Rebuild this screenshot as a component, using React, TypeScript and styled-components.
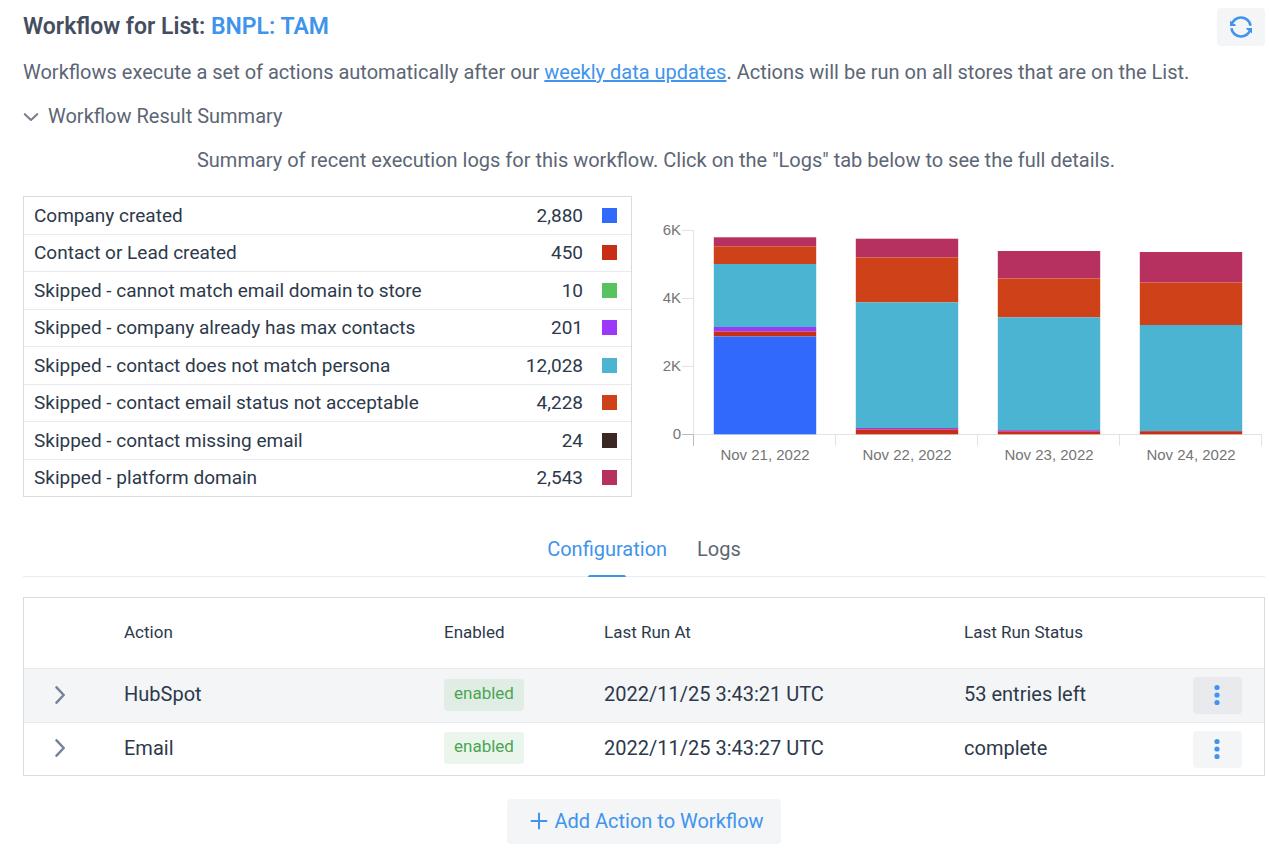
import React from "react";
import styled, { createGlobalStyle } from "styled-components";

const GlobalStyle = createGlobalStyle`
  *, *::before, *::after { box-sizing: border-box; }
  body {
    margin: 0;
    background: #fff;
    color: #5c6675;
    font: 400 20px/30px Roboto, "Liberation Sans", sans-serif;
  }
  button { font: inherit; cursor: pointer; }
`;

const BLUE = "#4094ec";

const Page = styled.main`
  padding: 8px 4px 7px 23px;
`;

const Header = styled.header`
  display: flex;
  align-items: center;
  justify-content: space-between;
`;

const Title = styled.h1`
  margin: 0;
  font-size: 23px;
  line-height: 38px;
  font-weight: 600;
  color: #454e5f;
`;

const ListLink = styled.a`
  color: ${BLUE};
  text-decoration: none;
`;

const SoftButton = styled.button<{ $dark?: boolean }>`
  display: inline-flex;
  align-items: center;
  justify-content: center;
  gap: 6px;
  border: 0;
  border-radius: 4px;
  padding: 0;
  background: ${(p) => (p.$dark ? "#e8eaee" : "#f3f5f7")};
  color: ${BLUE};
`;

const RefreshButton = styled(SoftButton)`
  width: 48px;
  height: 38px;
`;

const Intro = styled.p`
  margin: 11px 0 14px;
`;

const TextLink = styled.a`
  color: ${BLUE};
  text-decoration: underline;
`;

const SummaryToggle = styled.button`
  display: flex;
  align-items: center;
  gap: 9px;
  padding: 0;
  border: 0;
  background: none;
  color: inherit;
`;

const SummaryNote = styled.p`
  margin: 14px 0 21px;
  padding-left: 24px;
  text-align: center;
`;

const SummaryGrid = styled.section`
  display: grid;
  grid-template-columns: 1fr 1fr;
  gap: 24px;
  align-items: start;
`;

const LegendTable = styled.table`
  width: 100%;
  height: 301px;
  border: 1px solid #d8dce2;
  border-spacing: 0;
  color: #2d394b;
  font-size: 19px;
  line-height: 28px;
`;

const LegendCell = styled.td<{ $align?: string }>`
  padding: 1px 10px 0;
  text-align: ${(p) => p.$align ?? "left"};
  tr:not(:last-child) > & { border-bottom: 1px solid #e8eaee; }
`;

const SwatchCell = styled(LegendCell)`
  width: 38px;
  padding: 0 14px 0 9px;
`;

const Swatch = styled.span<{ $color: string }>`
  display: block;
  width: 15px;
  height: 15px;
  background: ${(p) => p.$color};
`;

const Chart = styled.svg`
  display: block;
  width: 100%;
  height: auto;
  font: 15px "Liberation Sans", Arial, sans-serif;
`;

const Tabs = styled.nav`
  display: flex;
  justify-content: center;
  gap: 30px;
  margin-top: 37px;
  border-bottom: 1px solid #e8ebef;
`;

const Tab = styled.button<{ $active?: boolean }>`
  position: relative;
  padding: 0 0 12px;
  border: 0;
  background: none;
  color: ${(p) => (p.$active ? BLUE : "inherit")};
  &::after {
    content: ${(p) => (p.$active ? '""' : "none")};
    position: absolute;
    left: 50%;
    bottom: -1px;
    width: 38px;
    height: 2px;
    margin-left: -19px;
    border-radius: 2px 2px 0 0;
    background: ${BLUE};
  }
`;

const ActionsTable = styled.table`
  width: 100%;
  margin-top: 20px;
  border: 1px solid #d8dce2;
  border-spacing: 0;
  table-layout: fixed;
  color: #2d394b;
`;

const Col = styled.col<{ $w?: number }>`
  width: ${(p) => (p.$w ? `${p.$w}px` : "auto")};
`;

const HeadCell = styled.th`
  height: 71px;
  padding: 0 20px 3px;
  border-bottom: 1px solid #e5eaef;
  text-align: left;
  font-size: 17px;
  font-weight: 400;
`;

const ActionRow = styled.tr<{ $hovered?: boolean }>`
  background: ${(p) => (p.$hovered ? "#f3f5f7" : "#fff")};
`;

const Cell = styled.td`
  height: 54px;
  padding: 0 20px;
  vertical-align: middle;
  tr:not(:last-child) > & { border-bottom: 1px solid #e5eaef; }
  tr:last-child > & { height: 52px; }
`;

const CellText = styled.div`
  padding-bottom: 3px;
`;

const MenuCell = styled(Cell)`
  padding: 0 22px 0 9px;
`;

const ExpandButton = styled.button`
  display: flex;
  width: 32px;
  height: 32px;
  align-items: center;
  justify-content: center;
  margin-bottom: 2px;
  padding: 0;
  border: 0;
  background: none;
`;

const Badge = styled.span<{ $dark?: boolean }>`
  display: block;
  width: max-content;
  margin-bottom: 2px;
  padding: 0 10px 4px;
  border-radius: 4px;
  background: ${(p) => (p.$dark ? "#e0ede4" : "#eaf6ec")};
  color: #4aa553;
  font-size: 17px;
  line-height: 28px;
`;

const MenuButton = styled(SoftButton)`
  display: flex;
  width: 49px;
  height: 37px;
`;

const Footer = styled.footer`
  display: flex;
  justify-content: center;
  margin-top: 23px;
`;

const AddButton = styled(SoftButton)`
  height: 45px;
  padding: 0 17px 1px 23px;
`;

const legend = [
  { label: "Company created", count: "2,880", color: "#3069fc" },
  { label: "Contact or Lead created", count: "450", color: "#c72e16" },
  { label: "Skipped - cannot match email domain to store", count: "10", color: "#57c360" },
  { label: "Skipped - company already has max contacts", count: "201", color: "#9b38fb" },
  { label: "Skipped - contact does not match persona", count: "12,028", color: "#4cb4d3" },
  { label: "Skipped - contact email status not acceptable", count: "4,228", color: "#cf4119" },
  { label: "Skipped - contact missing email", count: "24", color: "#3b2825" },
  { label: "Skipped - platform domain", count: "2,543", color: "#b63160" },
];

const BASE = 238;
const STEP = 142;
const [CREATED, LEAD, MAXED, PERSONA, STATUS, PLATFORM] = [0, 1, 3, 4, 5, 7].map((i) => legend[i].color);

/* Each day's segments, from the top of the bar down: [upper edge, colour]. */
const days: { label: string; segments: [number, string][] }[] = [
  {
    label: "Nov 21, 2022",
    segments: [[41.3, PLATFORM], [50.3, STATUS], [68, PERSONA], [131, MAXED], [135.5, LEAD], [140.5, CREATED]],
  },
  {
    label: "Nov 22, 2022",
    segments: [[42.7, PLATFORM], [61.4, STATUS], [106.4, PERSONA], [232, MAXED], [233.4, LEAD]],
  },
  {
    label: "Nov 23, 2022",
    segments: [[55, PLATFORM], [82.5, STATUS], [121.4, PERSONA], [234.2, MAXED], [235.3, LEAD]],
  },
  {
    label: "Nov 24, 2022",
    segments: [[56, PLATFORM], [86.4, STATUS], [129, PERSONA], [235.2, LEAD]],
  },
];

const yTicks = [
  { y: 34, label: "6K" },
  { y: 102, label: "4K" },
  { y: 170, label: "2K" },
  { y: 238, label: "0" },
];

function ResultChart() {
  return (
    <Chart viewBox="0 0 609 300" role="img" aria-label="Workflow results per day">
      <g stroke="#e3e3e3" fill="none">
        <path d="M37.5 34V238M38 238.5H606" />
        {yTicks.slice(0, 3).map((t) => (
          <path key={t.y} d={`M26 ${t.y + 0.5}H37`} />
        ))}
        {[1, 2, 3, 4].map((i) => (
          <path key={i} d={`M${37.5 + STEP * i} 239V250`} />
        ))}
        <path d="M26 238.5H37.5V250" stroke="#bdbdbd" />
      </g>
      {days.map((day, i) =>
        day.segments.map(([top, color], j) => {
          const bottom = j + 1 < day.segments.length ? day.segments[j + 1][0] : BASE + 0.3;
          return (
            <rect
              key={`${i}-${j}`}
              x={57.8 + STEP * i}
              y={top}
              width={102.4}
              height={bottom - top}
              fill={color}
            />
          );
        })
      )}
      <g fill="#757575">
        {yTicks.map((t) => (
          <text key={t.y} x="25" y={t.y + 5} textAnchor="end">
            {t.label}
          </text>
        ))}
        {days.map((day, i) => (
          <text key={day.label} x={109 + STEP * i} y="264" textAnchor="middle">
            {day.label}
          </text>
        ))}
      </g>
    </Chart>
  );
}

function RefreshIcon() {
  return (
    <svg width="24" height="24" viewBox="0 0 24 24" fill="none" aria-hidden="true">
      <g stroke={BLUE} strokeWidth="2.6">
        <path d="M2.6 9.8A9.7 9.7 0 0 1 21.6 10.8" />
        <path d="M21.4 14.2A9.7 9.7 0 0 1 2.4 13.2" />
      </g>
      <path d="M1 5.4V10.9H6.6V9.6L4.4 8.8Z" fill={BLUE} />
      <path d="M23 18.6V13.1H17.4V14.4L19.6 15.2Z" fill={BLUE} />
    </svg>
  );
}

function ChevronDown() {
  return (
    <svg width="16" height="12" viewBox="0 0 16 12" fill="none" aria-hidden="true">
      <path d="M1.8 4.2L8 10L14.2 4.2" stroke="#76808e" strokeWidth="2.1" strokeLinecap="round" strokeLinejoin="round" />
    </svg>
  );
}

function ChevronRight() {
  return (
    <svg width="10" height="18" viewBox="0 0 10 18" fill="none" aria-hidden="true">
      <path d="M1.5 1.3L8.7 9L1.5 16.7" stroke="#76839a" strokeWidth="2.5" strokeLinecap="round" strokeLinejoin="round" />
    </svg>
  );
}

function Dots() {
  return (
    <svg width="7" height="23" viewBox="0 0 7 23" fill={BLUE} aria-hidden="true">
      <circle cx="3" cy="3.5" r="2.6" />
      <circle cx="3" cy="11" r="2.6" />
      <circle cx="3" cy="18.5" r="2.6" />
    </svg>
  );
}

function PlusIcon() {
  return (
    <svg width="18" height="18" viewBox="0 0 18 18" fill="none" aria-hidden="true">
      <path d="M9 1.5V16.5M1.5 9H16.5" stroke={BLUE} strokeWidth="2" strokeLinecap="round" />
    </svg>
  );
}

const actions = [
  { name: "HubSpot", ranAt: "2022/11/25 3:43:21 UTC", status: "53 entries left", hovered: true },
  { name: "Email", ranAt: "2022/11/25 3:43:27 UTC", status: "complete", hovered: false },
];

export default function App() {
  return (
    <Page>
      <GlobalStyle />
      <Header>
        <Title>
          Workflow for List: <ListLink href="#list">BNPL: TAM</ListLink>
        </Title>
        <RefreshButton type="button" aria-label="Refresh">
          <RefreshIcon />
        </RefreshButton>
      </Header>
      <Intro>
        Workflows execute a set of actions automatically after our{" "}
        <TextLink href="#updates">weekly data updates</TextLink>. Actions will be run on all stores that are on the
        List.
      </Intro>
      <SummaryToggle type="button" aria-expanded="true">
        <ChevronDown />
        Workflow Result Summary
      </SummaryToggle>
      <SummaryNote>
        Summary of recent execution logs for this workflow. Click on the "Logs" tab below to see the full details.
      </SummaryNote>
      <SummaryGrid>
        <LegendTable>
          <tbody>
            {legend.map((row) => (
              <tr key={row.label}>
                <LegendCell>{row.label}</LegendCell>
                <LegendCell $align="right">{row.count}</LegendCell>
                <SwatchCell>
                  <Swatch $color={row.color} />
                </SwatchCell>
              </tr>
            ))}
          </tbody>
        </LegendTable>
        <ResultChart />
      </SummaryGrid>
      <Tabs role="tablist">
        <Tab type="button" role="tab" aria-selected="true" $active>
          Configuration
        </Tab>
        <Tab type="button" role="tab" aria-selected="false">
          Logs
        </Tab>
      </Tabs>
      <ActionsTable>
        <colgroup>
          <Col $w={80} />
          <Col $w={320} />
          <Col $w={160} />
          <Col $w={360} />
          <Col />
          <Col $w={80} />
        </colgroup>
        <thead>
          <tr>
            <HeadCell />
            <HeadCell>Action</HeadCell>
            <HeadCell>Enabled</HeadCell>
            <HeadCell>Last Run At</HeadCell>
            <HeadCell>Last Run Status</HeadCell>
            <HeadCell />
          </tr>
        </thead>
        <tbody>
          {actions.map((a) => (
            <ActionRow key={a.name} $hovered={a.hovered}>
              <Cell>
                <ExpandButton type="button" aria-label={`Expand ${a.name}`}>
                  <ChevronRight />
                </ExpandButton>
              </Cell>
              <Cell>
                <CellText>{a.name}</CellText>
              </Cell>
              <Cell>
                <Badge $dark={a.hovered}>enabled</Badge>
              </Cell>
              <Cell>
                <CellText>{a.ranAt}</CellText>
              </Cell>
              <Cell>
                <CellText>{a.status}</CellText>
              </Cell>
              <MenuCell>
                <MenuButton type="button" aria-label={`Options for ${a.name}`} $dark={a.hovered}>
                  <Dots />
                </MenuButton>
              </MenuCell>
            </ActionRow>
          ))}
        </tbody>
      </ActionsTable>
      <Footer>
        <AddButton type="button">
          <PlusIcon />
          Add Action to Workflow
        </AddButton>
      </Footer>
    </Page>
  );
}
